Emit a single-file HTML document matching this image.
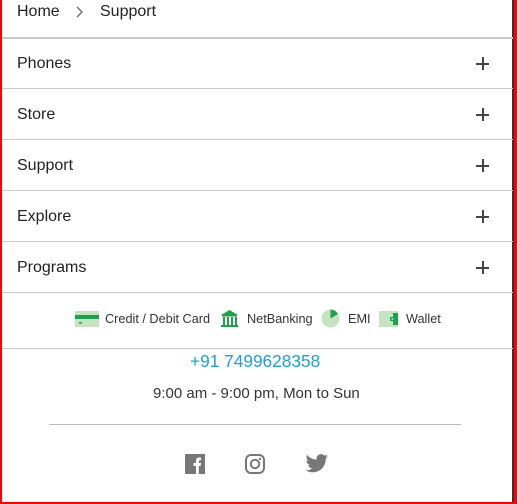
<!DOCTYPE html>
<html><head><style>
*{margin:0;padding:0;box-sizing:border-box}
body{width:517px;height:504px;overflow:hidden;background:#fff;font-family:"Liberation Sans",sans-serif;color:#222;position:relative}
.frame{position:absolute;left:0;top:0;width:517px;height:504px;border-left:2px solid #f00;border-right:3px solid #f00;border-bottom:2px solid #f00}
.rline{position:absolute;left:512px;top:0;width:2px;height:502px;background:#333}
.hl{position:absolute;left:2px;width:511px;height:1px;background:#c8c8c8}
.t{position:absolute;font-size:16px;color:#222}
.plus{position:absolute;left:476px;width:13px;height:13px}
.plus:before{content:"";position:absolute;left:0;top:5.5px;width:13px;height:2px;background:#444}
.plus:after{content:"";position:absolute;left:5.5px;top:0;width:2px;height:13px;background:#444}
.pay{position:absolute;top:312px;font-size:12.7px;color:#333}
</style></head><body>
<div class="frame"></div><div class="rline"></div>
<div class="t" style="left:17px;top:3px">Home</div>
<svg style="position:absolute;left:76px;top:6px" width="8" height="12"><path d="M1 1L6 6L1 11" fill="none" stroke="#666" stroke-width="1.3"/></svg>
<div class="t" style="left:100px;top:3px">Support</div>
<div class="hl" style="top:37px;height:2px"></div>
<div class="t" style="left:17px;top:55px">Phones</div><div class="plus" style="top:57px"></div>
<div class="hl" style="top:88px"></div>
<div class="t" style="left:17px;top:106px">Store</div><div class="plus" style="top:108px"></div>
<div class="hl" style="top:139px"></div>
<div class="t" style="left:17px;top:157px">Support</div><div class="plus" style="top:159px"></div>
<div class="hl" style="top:190px"></div>
<div class="t" style="left:17px;top:208px">Explore</div><div class="plus" style="top:210px"></div>
<div class="hl" style="top:241px"></div>
<div class="t" style="left:17px;top:259px">Programs</div><div class="plus" style="top:261px"></div>
<div class="hl" style="top:292px"></div>
<svg style="position:absolute;left:75px;top:311px" width="24" height="16"><rect width="24" height="16" fill="#c5e3bf"/><rect y="4" width="24" height="4" fill="#1aa34a"/><rect x="4" y="11" width="3" height="1.5" fill="#1aa34a"/></svg>
<div class="pay" style="left:105px">Credit / Debit Card</div>
<svg style="position:absolute;left:220px;top:309px" width="19" height="19"><polygon points="9.5,1 18,6 1,6" fill="#1aa34a"/><rect x="2" y="6" width="15" height="1.5" fill="#1aa34a"/><rect x="3" y="8" width="2" height="8" fill="#1aa34a"/><rect x="7" y="8" width="2" height="8" fill="#1aa34a"/><rect x="11" y="8" width="2" height="8" fill="#1aa34a"/><rect x="15" y="8" width="2" height="8" fill="#1aa34a"/><rect x="1" y="16" width="17" height="2" fill="#1aa34a"/></svg>
<div class="pay" style="left:247px">NetBanking</div>
<svg style="position:absolute;left:321px;top:309px" width="19" height="19"><circle cx="9.5" cy="9.5" r="9" fill="#c5e3bf"/><path d="M9.5 9.5V0.5A9 9 0 0 1 17 5Z" fill="#1aa34a"/></svg>
<div class="pay" style="left:348px">EMI</div>
<svg style="position:absolute;left:379px;top:311px" width="19" height="16"><rect width="19" height="16" fill="#c5e3bf"/><rect x="14" y="2" width="5" height="12" fill="#1aa34a"/><rect x="11" y="6" width="5" height="4" fill="#1aa34a"/><rect x="12.5" y="7.3" width="2" height="1.4" fill="#c5e3bf"/></svg>
<div class="pay" style="left:406px">Wallet</div>
<div class="hl" style="top:348px"></div>
<div style="position:absolute;left:190px;top:351px;font-size:17.3px;color:#1a9fd9">+91 7499628358</div>
<div style="position:absolute;left:153px;top:385px;font-size:15px;color:#333">9:00 am - 9:00 pm, Mon to Sun</div>
<div style="position:absolute;left:49px;top:424px;width:412px;height:1px;background:#bbb"></div>
<svg style="position:absolute;left:185px;top:454px" width="20" height="20"><rect width="20" height="20" fill="#777"/><path d="M11 20V12H8.5V9H11V6.8C11 4.5 12.4 3.5 14.3 3.5C15.2 3.5 16 3.6 16 3.6V6.2H14.8C13.9 6.2 13.8 6.7 13.8 7.3V9H16L15.6 12H13.8V20Z" fill="#fff"/></svg>
<svg style="position:absolute;left:245px;top:454px" width="20" height="20"><rect x="1" y="1" width="18" height="18" rx="5" fill="none" stroke="#777" stroke-width="2"/><circle cx="10" cy="10" r="4.2" fill="none" stroke="#777" stroke-width="2"/><circle cx="15" cy="5" r="1.2" fill="#777"/></svg>
<svg style="position:absolute;left:305px;top:454px" width="24" height="20" viewBox="0 0 24 20"><path d="M23 2.3c-.8.4-1.7.6-2.6.7.9-.6 1.6-1.4 2-2.5-.9.5-1.9.9-2.9 1.1C18.6.7 17.400.1 16.1.1c-2.5 0-4.6 2-4.6 4.6 0 .4 0 .7.1 1C7.8 5.5 4.4 3.7 2.1.9c-.4.7-.6 1.5-.6 2.300 0 1.6.8 3 2 3.8-.8 0-1.5-.2-2.1-.6v.1c0 2.2 1.6 4.1 3.7 4.5-.4.1-.8.2-1.2.2-.3 0-.6 0-.9-.1.6 1.8 2.3 3.2 4.3 3.2-1.6 1.2-3.6 2-5.7 2-.4 0-.7 0-1.1-.1 2 1.3 4.5 2.1 7.1 2.1 8.5 0 13.1-7 13.1-13.1v-.6c.9-.6 1.7-1.5 2.3-2.4z" fill="#777"/></svg>
</body></html>
